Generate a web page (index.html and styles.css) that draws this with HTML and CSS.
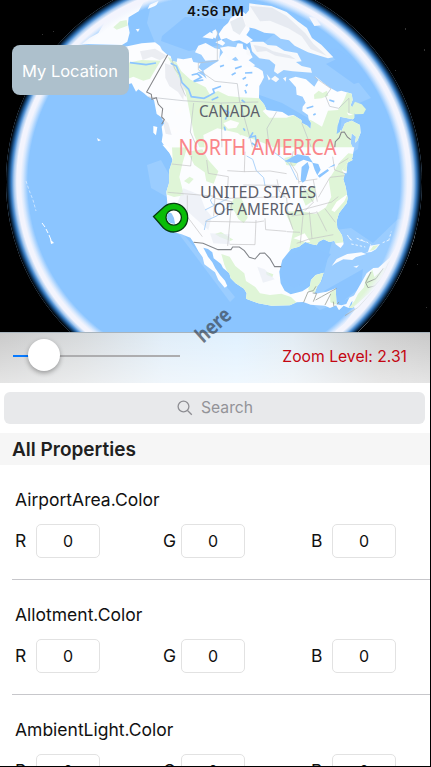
FILE: index.html
```html
<!DOCTYPE html>
<html lang="en">
<head>
<meta charset="utf-8">
<title>Map Properties</title>
<link rel="stylesheet" href="styles.css">
</head>
<body>
<main class="screen">
  <section class="map">
    <svg class="globe" viewBox="0 0 431 332" width="431" height="332">
      <defs>
        <radialGradient id="edge" gradientUnits="userSpaceOnUse" cx="214" cy="182" r="208">
          <stop offset=".895" stop-color="#f1f4fd" stop-opacity="0"/>
          <stop offset=".918" stop-color="#f1f4fd" stop-opacity=".75"/>
          <stop offset=".93" stop-color="#f3f4fd"/>
          <stop offset=".948" stop-color="#f3f4fd"/>
          <stop offset=".962" stop-color="#a4c8ef"/>
          <stop offset=".973" stop-color="#4587cb"/>
          <stop offset=".985" stop-color="#12406f"/>
          <stop offset=".998" stop-color="#000"/>
        </radialGradient>
        <clipPath id="disc"><circle cx="214" cy="182" r="208"/></clipPath>
        <path id="north" d="M-45 140L5 130 45 127 60 138 66 150 82 164 92 168 96 183 110 186 112 175 130 178 155 173 160 186 182 190 175 202 187 213 171 217 188 226 200 236 190 212 220 192 235 183 240 170 250 155 268 160 270 175 285 183 300 180 308 190 330 194 345 200 355 205 368 213 372 232 365 246 358 258 357 295 372 313 380 330 403 333 427 336 445 347 460 345 484 360 486 369 502 377 512 387 513 368 506 358 504 345 487 333 488 320 497 308 488 290 470 284 468 262 446 237 467 230 498 238 523 260 535 240 525 228 550 248 570 263 592 275 604 272 635 281 638 300 632 315 641 330 648 350 638 358 600 350 592 385 605 393 615 370 635 362 660 375 662 398 652 422 645 428 648 410 635 400 632 430 640 446 628 462 638 480 622 488 620 520H96L98 480 88 458 75 440 65 425 68 405 65 380 73 370 64 352 50 342 42 300 22 289 12 280-5 268-12 275-25 250-45 255z"/>
        <path id="south" d="M66-8L68 30 58 60 57 100 49 125 52 160 60 230 72 247 95 253 121 263 130 276 146 305 158 322 163 343 195 367 205 390 224 413 232 408 225 392 210 375 196 355 187 337 174 320 160 293 174 297 187 307 191 325 213 342 219 354 238 370 242 385 257 400 282 416 290 430 288 446 325 460 365 467 420 466 440 457 460 456 482 464 525 467 540 474 560 466 557 415 530 425 493 432 501 410 512 395 521 368 497 375 483 390 480 409 457 424 422 433 404 422 392 400 388 365 397 330 424 296 447 290 466 276 483 282 500 286 506 275 521 268 538 276 553 272 557 283 572 294 581 282 576 256 562 234 560 213 567 190 590 160 593 145 587 110 580 88 584 74 576 60 589 45 598 25 607 24 613-8z"/>
        <clipPath id="north-land"><use href="#north"/></clipPath>
        <clipPath id="south-land"><use href="#south"/></clipPath>
      </defs>
      <rect width="431" height="332"/>
      <g clip-path="url(#disc)">
        <rect width="431" height="332" fill="#8bc5ff"/>
        <path fill="#9bcdff" d="M155 43l-8-20 5-23 55 0 30 19-8 16 20 20 36-30 58 38 28 35-24 10 13 24-2 17-21 14-15-37-40-23-56-20-64-13zM147 165l14-5 10 18-4 24 18 34 50 61-5 5-36-48-22-29-5-28-16-9zM335 230l16-2 22 15 25-24 13 2-21 50-36 25-34 14-15-11 17-18z"/>
        <path fill="#8bc4ff" d="M162 36l23-19 54 3-19 25-31 6-28-10zM326 64l17-8 34 21-23 7zM325 50l11-2 21 14-19 0zM287 256l20-9 24 7-15 22-22 12-13-11zM324 291l39-22-2 18-24 19z"/>

        <g transform="scale(.3333)">
          <path fill="#fafcff" d="M434 0l-18 34-30 18-2 20 5 26-7 27-16 10-120-3 22-18 27-15 25-42 30-25 22-32zM470 14l6-12-27 12-6 13 22-9zM407 88l12-2-5 10zM291 414l12 7-9 3z"/>
          <path fill="#def4d8" d="M340 82l20-18 20-4 3 17-33 12z"/>
        </g>

        <g transform="translate(140) scale(.3333)">
          <use href="#north" fill="#fcfdff"/>
          <g clip-path="url(#north-land)">
            <path fill="#dff5d7" d="M-45 190L5 180 62 182 30 236 10 242-20 230-45 240zM83 170l23 12 18 32 28 25 45 23 12 21 25-10 31 15 35 4 66 3 17 28-15 10 20 20 52 0 30-10 48 20 28 17 18-48 30-2 18-30 20-50 60 12 22 40 4 100-55 116-50-5-25-20-60-15-118 8-15-48-90-33-50 28-18 52 40 30-67 0-48-110-25-130z"/>
            <path fill="#fdfdfe" d="M520 292l18-15 12 8 8 28-16 16-20 1zM190 405l42-20 61 14 39 32 5 30-140 10zM103 330l20-14 6 18-20 12zM95 388l12-8 8 12-8 10zM250 370l22-10 26 8-9 15-25 3zM508 300l18-10-2 60-20-10z"/>
            <path fill="#dff5d7" d="M522 284l14-12 12 7 13-7 4 15-20 8-22 2z"/>
            <path fill="#e6e9ef" d="M0 154L45 146 82 168 60 181 35 170 8 180zM75 190l25 9 12 28 22 28-4 45-16-24-26-18-12-25zM65 350l20 20 10 35-18-4z" opacity=".8"/>
            <path fill="none" stroke="#8cc5ff" stroke-width="5" d="M92 190l17 8 10 25 7 25 20 20 8 22 38 5 15-8M155 225l17-4 12 11-23 12 29-4M203 290l20-12-4-10 24-9M215 300l20-9M315 270l4 10M305 300l10 8M315 219l22-1M275 225l12-7M285 206l20-7M240 200l12-4M308 238l10-6M317 258l6-5M252 330l14 7-10 22M339 397l-9 15 16-4 5 31-16-10M253 380l3 12M310 385l5 7M500 325l20-6M520 345l7-4M568 300l15 5M-30 188l48 6 30-5"/>
          </g>
          <path fill="#fbfcff" d="M165 157l10-20 22-8 28 16 15 3-2 31-42 3-12-18zM240 143l24-4 24 3 5-12 15 1 2 15 16 6 12 20-12 9 20 15-15 6-26-9-18-23-20 14zM187 112l23-16 14 8-5 13zM217 94l10-6 6 12-7 16-7-6zM236 102l15-22 13-11 8-15 35-20 18 15 4 41-10 15 20 15-18 12-23-11-19 3-20-10-16 5zM226 127l18-8 12 10-8 8z"/>
          <path fill="#f7f9fc" d="M328 10l66 8 46 18 33 28 28 20 15 30 28 20 36 38-16 3-60-18-40-20-17-16-25-5-19-15-30-3-28-12-25-5-10-30 17-20zM507 50l20 4 16 22-20 2zM330 125l40 0 13 10 26 2 24 15 39 7 13 25-17 2 17 12 27 6 4 14-58-4-27-4-18 12-11-8 4-20-18-15-30-4-22-21zM320 138l9 12 5 20-15-7zM380 222l12 15-6 4zM393 237l12-10 13 10-10 10zM429 235l10-5-2 15z"/>
          <path fill="#e1e6ed" opacity=".8" d="M330 18l66 5 44 25 56 52 24 31 40 36-48-20-27-38-40-24-55-23-30 2zM270 65l37-18 10 30-18 28-20-13zM340 135l37 7 22 12 50 12 18 12-60-11-28-14-28 3z"/>
          <path fill="none" stroke="#bcc1c7" stroke-width="2" d="M232 92v90l-57 7v20l50 35 67 7 7 55M25 291l104 11 113 7 113-3M96 180l8 26 19 25-1 24 15 34M161 309l-10 87 24 55M244 310l2 155M301 310l40 144M410 335l-29 50 9 77M485 368l29 75 54 18M523 231l50 35-16 23 12 30 27 6 31-30 0 48"/>
          <path fill="none" stroke="#85868a" stroke-width="3.2" d="M83 164L20 276l14 7 2 15 13-5 6 20 13 13-3 25 8 8-8 14M115 469l62 9 106-2 60-10 91-4 60-3 30 14 15 27 18-10 26-35 3-30 12-12 6-16 9-1 9 15 10 8"/>
          <path fill="#8bc5ff" d="M440 468l28-17 26 7 10 14-29-4-14 9zM482 500l10-26 12 0-4 35zM510 475l18 3 13 20-9 7zM535 500l30-18 3 8zM602 352l-9 25-3 25 10-7 4-31zM644 332l10 22 20 3-31 7z"/>
          <path fill="#dff5d7" d="M645 305l20 8 13 15-8 14-25 1-12-17z"/>
          <path fill="#fff" d="M40 378l12 3-4 25-8-8zM67 434l15 3 32 36-10 4zM620 337l20 8-14 1z"/>
        </g>

        <g transform="translate(150 150) scale(.3333)">
          <use href="#south" fill="#fcfdff"/>
          <g clip-path="url(#south-land)">
            <path fill="#dff5d7" d="M60-10l52 0-14 48-10 43 14 55-30 5-28-10zM112 5l45-7 18 32 30 34-14 37-22-7-5-27-31-22zM102 93l17-13 12 7-14 15zM252 145l22 0 16 34 3 25-12 15-16-12-12-23-15-13zM403 24l28-7 16 15-13 17-25-4zM405 185l48-2 44 9 31-20 16-31-8-52 34-54 25-25 80 10-28 70 0 75-22 42-12 66-55 7-60 5-13 28-42-20-20 40-5-34 12-58zM450 125l47-17-5 43-25 16zM214 312l25 8 17 28 27 22 5 23 28 18 14 19 30 5 34-4 29 10 25 25-60 10-70-5-40-30-20-35-18-22-17-40zM478 385l48-27-13 44-18 27-20-8zM540 430l25-20-4 55-20-8zM195 252l18-6 37 23-10 4-31-12zM348 365l22 8-3 9-17-7z"/>
            <path fill="#fff" d="M430 265l34-15 17 26-15 0zM560 155l33-23-10 22-29 32-10-5z"/>
            <path fill="#e8edf5" opacity=".65" d="M100 115l50 20 15 40 20 25-10 40-47-42-45-41zM180 250l60 3 0 30-50-3zM322 350l22 8 30 30-35 10z"/>
            <path fill="none" stroke="#add3fa" stroke-width="3" d="M188 143l-7 7 6 12 8 2M163 240l6-28 33-15 37-30M290 18l18 10 11 34 22 21 4 25M363 0l30 22 25 19 24 49M165 180l70-35"/>
          </g>
          <path fill="none" stroke="#c2c2c4" stroke-width="2" d="M65 42l57 6 3-30M53 127l120 10 22 2-4 60M112 136l0 64 45 60M196 145l49 10-12 133M166 214l150 3 26-4M318 210l-3 74-76-1M170 30l5 40 60 10-4 66M285 5l-2 60-51-3M282 65l78-2 50 8M280 105l102 1M235 145l170-5M345 205l2 34 62 5M381 88l7 36 22 20 4 50 15 45M430 4l-8 35 20 32 5 30M447 95l55-8M455 105l35 52-25 25M490 90l12 65M455 180l90-24 20-16M505 142l35-60 45-5M425 198l75-10M460 187l-9 93M478 185l8 80M500 184l30 60M525 176l31 41M410 245l40 2M440 280l35-12 75-14M548 20l6 40 30 10M565 43l30-18"/>
          <path fill="none" stroke="#818489" stroke-width="3.2" d="M131 277l28 3 45 19 39 0 5-8 20 0 15 11 15 20 17 5 15-17 14-1 16 17 14 24 20 0"/>
          <path fill="none" stroke="#979d96" stroke-width="2.4" d="M461 457l13-31 16-4 8-13M490 455l10-25-12-1M497 450l18-10 45-25M525 465l17-33M552 470l-2-15M559 466l8-10"/>
          <path fill="#8bc5ff" d="M404 34l38-21 34 6 13 19-28-9-22 11zM452 90l3-39 18-15 5 16-11 39-9 7zM487 38l18 4 7 17-10 17-8-17zM503 77l30-20 4 5-28 21zM534 54l20-12 0 5z"/>
          <g fill="#f8fbff">
            <path d="M545 348l15-21 32-15 42-5 15 5-32 10-10 8-27-2-22 11zM654 305l6-18 30-5-12 16-14 8-18 2zM610 350l17-4-7 7zM593 258l6 9 10 5M620 268l18 3 16 8"/>
            <path d="M556 462l18 4 15-4 9-19 25-12-4 15-15 10-8 18-15-7-14 14z"/>
            <path d="M610 440l40-70 20-16 15-1 34-30 46-73 40 0-60 138-70 95-50 80-75 0 8-22 25-20 33-43-10-16z"/>
          </g>
          <path fill="#dff5d7" d="M624 432l18-20 5-25 20-28 6 22 40-35 19-40-19 60-55 63-50 45-12 0 18-22zM659 303l11-16 16-1-13 13z"/>
          <path fill="none" stroke="#929894" stroke-width="2.5" d="M663 366l-16 32 7 15 20-5 27-30M650 398l28-12 22-31M585 497l40-25 65-72 25-60 28-32"/>
          <path fill="none" stroke="#e9f5ff" stroke-width="3" stroke-dasharray="7 6" d="M592 255l12 17M620 265l25 8M604 282l42 9M650 275l14 12M698 278l17-7M716 272l8-27"/>
        </g>
        <path stroke="#c8e3ff" fill="none" d="M26 181l3 9 4 10 3 11" stroke-dasharray="3 2"/>
        <path stroke="#fff" fill="none" d="M42 223l3 4M46 229l2 4M49 235l2 5"/>
        <path fill="#fff" d="M50 239l4 4-3 1z"/>
        <circle cx="214" cy="182" r="209" fill="url(#edge)"/>
      </g>
      <path fill="#333" d="M42 34h1v1h-1zM53 31h1v1h-1zM405 28h1v2h-1zM424 49h1v2h-1zM395 70h1v1h-1zM417 264h1v1h-1zM426 307h1v1h-1zM19 255h1v1h-1z"/>
      <g class="map-label">
        <text x="199" y="116.500" font-size="15.500" textLength="61" lengthAdjust="spacingAndGlyphs">CANADA</text>
        <text class="continent" x="178.500" y="154.500" font-size="21.500" textLength="158" lengthAdjust="spacingAndGlyphs">NORTH AMERICA</text>
        <text x="200" y="198" font-size="16.500" textLength="116" lengthAdjust="spacingAndGlyphs">UNITED STATES</text>
        <text x="213.500" y="215" font-size="16.500" textLength="90" lengthAdjust="spacingAndGlyphs">OF AMERICA</text>
      </g>
      <path d="M153.500 216.500L164.500 206.500A14.300 14.300 0 1 1 163.500 228Z" fill="#09bd08" stroke="#073b12" stroke-width="1.300"/>
      <circle cx="173.700" cy="217.500" r="7.700" fill="#fff" stroke="#073b12" stroke-width="1.300"/>
      <path d="M168 213q3-1 4 1l2 4 1 6q-9-1-8-8" fill="#91c7fb"/>
    </svg>
    <time class="clock">4:56 PM</time>
    <button class="location">My Location</button>
  </section>
  <section class="zoom-bar">
    <div class="slider"><span class="filled"></span><span class="thumb"></span></div>
    <span class="zoom-level">Zoom Level: 2.31</span>
    <svg class="brand" viewBox="0 0 60 60" width="60" height="60"><text x="30" y="36" text-anchor="middle" transform="rotate(-42 30 30)" textLength="40" lengthAdjust="spacingAndGlyphs">here</text></svg>
  </section>
  <div class="search-wrap">
    <div class="search">
      <svg viewBox="0 0 18 18" width="18" height="18"><circle cx="7.500" cy="7.500" r="5.400"/><path d="M11.500 11.500l4.300 4.300"/></svg>
      <span>Search</span>
    </div>
  </div>
  <h1 class="heading"><span>All Properties</span></h1>
  <section class="properties">
    <article class="property">
      <h2><span>AirportArea.Color</span></h2>
      <div class="channels"><label>R<span class="value">0</span></label><label>G<span class="value">0</span></label><label>B<span class="value">0</span></label></div>
    </article>
    <article class="property">
      <h2><span>Allotment.Color</span></h2>
      <div class="channels"><label>R<span class="value">0</span></label><label>G<span class="value">0</span></label><label>B<span class="value">0</span></label></div>
    </article>
    <article class="property">
      <h2><span>AmbientLight.Color</span></h2>
      <div class="channels"><label>R<span class="value">0</span></label><label>G<span class="value">0</span></label><label>B<span class="value">0</span></label></div>
    </article>
  </section>
</main>
</body>
</html>
```
FILE: styles.css
```css
* { box-sizing: border-box; }
body { margin: 0; background: #000; font-family: Inter, Roboto, sans-serif; color: #111; }
.screen { width: 430px; height: 766px; overflow: hidden; background: #fff; }
.map { position: relative; height: 332px; }
.globe { display: block; }
.map-label { font-family: "Noto Sans", sans-serif; fill: #5c5f6b; }
.map-label .continent { fill: #fa8589; }
.clock { position: absolute; top: 3px; left: 187px; width: 58px; font-size: 13.500px; line-height: 16px; font-weight: 600; letter-spacing: .3px; white-space: nowrap; }
.location { position: absolute; left: 11.500px; top: 45px; width: 117px; height: 50px; padding: 1px 0 0; border: 0; border-radius: 8px; background: #adc0cc; color: #fff; font: 16.500px Inter, sans-serif; }
.zoom-bar { position: relative; display: flex; justify-content: space-between; align-items: center; height: 51px; padding: 0 23px 4px 13px; border-top: 1px solid #a8b4bd; background: linear-gradient(90deg, #cacaca 0%, #d6d9db 18%, #e0edf8 38%, #e0f1ff 55%, #e2ecf4 68%, #d1d1d1 88%, #c9c9c9 100%); }
.zoom-bar::before { content: ""; position: absolute; inset: 0; background: linear-gradient(#fff0, #ffffff80); }
.slider { position: relative; width: 167px; height: 2px; background: #adadaf; }
.filled { display: block; width: 18px; height: 2px; background: #087aff; }
.thumb { position: absolute; left: 15px; top: -16px; width: 32px; height: 32px; border-radius: 50%; background: #fff; box-shadow: 0 2px 5px #0005; }
.zoom-level { position: relative; color: #c40612; font-size: 15.700px; }
.brand { position: absolute; left: 184px; top: -37px; font: 700 21px "Noto Sans", sans-serif; fill: #3d4a59; opacity: .72; }
.search-wrap { height: 50px; padding: 9px 5px 9px 4px; }
.search { display: flex; align-items: center; justify-content: center; gap: 7px; height: 32px; padding-bottom: 1px; border-radius: 6px; background: #e8e9eb; color: #939398; font-size: 15.700px; }
.search svg { fill: none; stroke: #8e8e93; stroke-width: 1.300; }
.heading { display: flex; align-items: center; height: 32px; margin: 0; padding-left: 12px; background: #f6f6f6; color: #202020; font-size: 19px; font-weight: 600; }
.property { height: 115px; margin-left: 12px; padding: 23px 0 0 3px; border-bottom: 1px solid #c7c7cb; }
h2 { margin: 0 0 12px; font-size: 17.500px; line-height: 24px; font-weight: 400; }
.channels { display: grid; grid-template-columns: 148px 148px 85px; }
.channels label { display: grid; grid-template-columns: 21px 64px; font-size: 17.500px; line-height: 33px; }
.channels label:nth-child(2) { grid-template-columns: 18px 64px; }
.value { height: 34px; border: 1px solid #e2e2e2; border-radius: 5px; text-align: center; font-size: 16px; line-height: 32px; }
```
